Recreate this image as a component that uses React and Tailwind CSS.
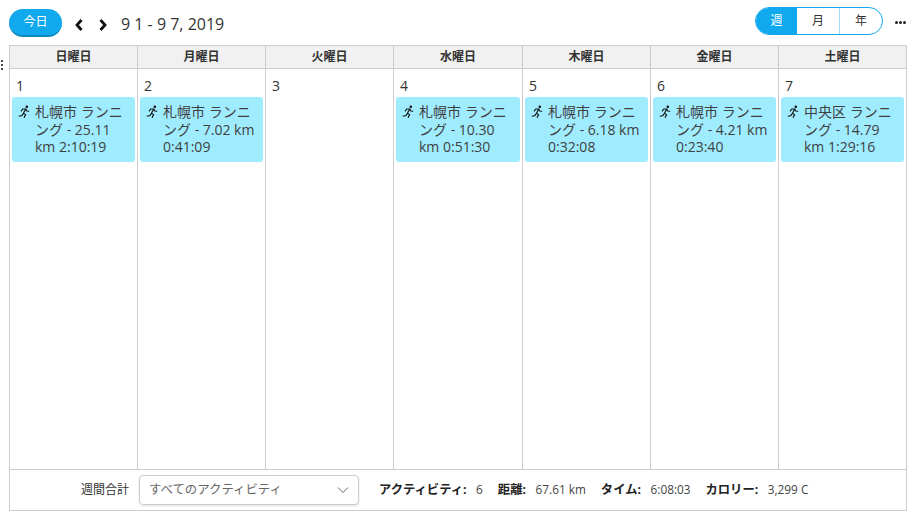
const FONT = "font-['Open_Sans','Noto_Sans_CJK_JP',sans-serif]";

const COLUMNS = "grid-cols-[128px_128px_128px_129px_128px_128px_127px]";

const DAYS = ["日曜日", "月曜日", "火曜日", "水曜日", "木曜日", "金曜日", "土曜日"];

const EVENTS = [
  { day: 1, lines: ["札幌市 ランニ", "ング - 25.11", "km 2:10:19"] },
  { day: 2, lines: ["札幌市 ランニ", "ング - 7.02 km", "0:41:09"] },
  { day: 3, lines: null },
  { day: 4, lines: ["札幌市 ランニ", "ング - 10.30", "km 0:51:30"] },
  { day: 5, lines: ["札幌市 ランニ", "ング - 6.18 km", "0:32:08"] },
  { day: 6, lines: ["札幌市 ランニ", "ング - 4.21 km", "0:23:40"] },
  { day: 7, lines: ["中央区 ランニ", "ング - 14.79", "km 1:29:16"] },
];

const TOTALS = [
  ["アクティビティ:", "6"],
  ["距離:", "67.61 km"],
  ["タイム:", "6:08:03"],
  ["カロリー:", "3,299 C"],
];

function RunnerIcon() {
  return (
    <svg className="mt-[2px] h-[13px] w-[12px] shrink-0" viewBox="0 0 12 13">
      <circle cx="8.8" cy="1.7" r="1.3" fill="#111" />
      <path
        d="M3 6.4 L4.8 4 L7.8 4 L5.4 8.2 L7.6 9.6 L6 12.8 M5.4 8.2 L4 10.6 L0.8 11.2 M7.8 4 L8.8 6 L11.2 6.2"
        fill="none"
        stroke="#111"
        strokeWidth="1.1"
      />
    </svg>
  );
}

function EventCard({ lines }) {
  return (
    <div className="mx-[2px] flex h-[65px] rounded-[3px] bg-[#a0ecff] pl-[6px] pt-[6px] text-[14px] leading-[17.5px] text-[#3f3f3f]">
      <RunnerIcon />
      <div className="ml-[5px] whitespace-nowrap">
        {lines.map((line) => (
          <div key={line}>{line}</div>
        ))}
      </div>
    </div>
  );
}

export default function App() {
  return (
    <div className={`${FONT} relative h-[520px] w-[918px] overflow-hidden bg-white text-[#333]`}>
      <div className="absolute left-[1px] top-[60px] flex flex-col gap-[2px]">
        <span className="h-[2px] w-[2px] bg-[#444]" />
        <span className="h-[2px] w-[2px] bg-[#444]" />
        <span className="h-[2px] w-[2px] bg-[#444]" />
      </div>

      <div className="flex h-[45px] items-start pl-[9px] pr-[12px] pt-[9px]">
        <button className="h-[28px] w-[53px] rounded-[14px] border-b-2 border-[#0f86bd] bg-[#11a9ed] text-[12px] leading-[24px] text-white">
          今日
        </button>
        <svg className="ml-[13px] mt-[10px] h-[12px] w-[8px]" viewBox="0 0 8 12">
          <path d="M6.5 1 L2 6 L6.5 11" fill="none" stroke="#111" strokeWidth="2.8" />
        </svg>
        <svg className="ml-[16px] mt-[10px] h-[12px] w-[8px]" viewBox="0 0 8 12">
          <path d="M1.5 1 L6 6 L1.5 11" fill="none" stroke="#111" strokeWidth="2.8" />
        </svg>
        <span className="ml-[14px] mt-[4px] text-[16px] leading-[22px] text-[#333]">9 1 - 9 7, 2019</span>

        <div className="ml-auto mt-[-2px] flex h-[28px] w-[128px] overflow-hidden rounded-[14px] border border-[#11a9ed] text-[12px]">
          <div className="flex w-[41px] items-center justify-center bg-[#11a9ed] text-white">週</div>
          <div className="flex w-[43px] items-center justify-center border-r border-[#a0dcf6]">月</div>
          <div className="flex w-[42px] items-center justify-center">年</div>
        </div>
        <div className="ml-[12px] mt-[12px] flex gap-[1px]">
          <span className="h-[3px] w-[3px] rounded-full bg-[#222]" />
          <span className="h-[3px] w-[3px] rounded-full bg-[#222]" />
          <span className="h-[3px] w-[3px] rounded-full bg-[#222]" />
        </div>
      </div>

      <div className="ml-[9px] w-[898px] border border-[#ccc]">
        <div className={`grid h-[23px] ${COLUMNS} border-b border-[#ccc] bg-[#f1f1f1]`}>
          {DAYS.map((name, i) => (
            <div
              key={name}
              className={`text-center text-[12px] font-bold leading-[22px] text-[#333] ${i < 6 ? "border-r border-[#ccc]" : ""}`}
            >
              {name}
            </div>
          ))}
        </div>
        <div className={`grid h-[401px] ${COLUMNS} border-b border-[#ccc]`}>
          {EVENTS.map((ev, i) => (
            <div key={ev.day} className={i < 6 ? "border-r border-[#ccc]" : ""}>
              <div className="pl-[6px] pt-[5px] text-[14px] leading-[23px] text-[#333]">{ev.day}</div>
              {ev.lines ? <EventCard lines={ev.lines} /> : null}
            </div>
          ))}
        </div>
        <div className="flex h-[40px] items-center text-[12px]">
          <span className="ml-[71px] text-[#333]">週間合計</span>
          <div className="ml-[10px] flex h-[30px] w-[220px] items-center justify-between rounded-[4px] border border-[#ccc] pl-[9px] pr-[9px] text-[12.4px] text-[#666] shadow-[0_1px_2px_rgba(0,0,0,0.12)]">
            <span>すべてのアクティビティ</span>
            <svg className="h-[8px] w-[12px]" viewBox="0 0 12 8">
              <path d="M1 1.5 L6 6.5 L11 1.5" fill="none" stroke="#666" strokeWidth="1" />
            </svg>
          </div>
          <div className="ml-[20px] flex items-center">
            {TOTALS.map(([label, value]) => (
              <div key={label} className="mr-[15px] flex gap-[9.6px]">
                <span className="text-[12.3px] font-bold text-[#222]">{label}</span>
                <span className="text-[11.8px] text-[#444]">{value}</span>
              </div>
            ))}
          </div>
        </div>
      </div>
    </div>
  );
}
